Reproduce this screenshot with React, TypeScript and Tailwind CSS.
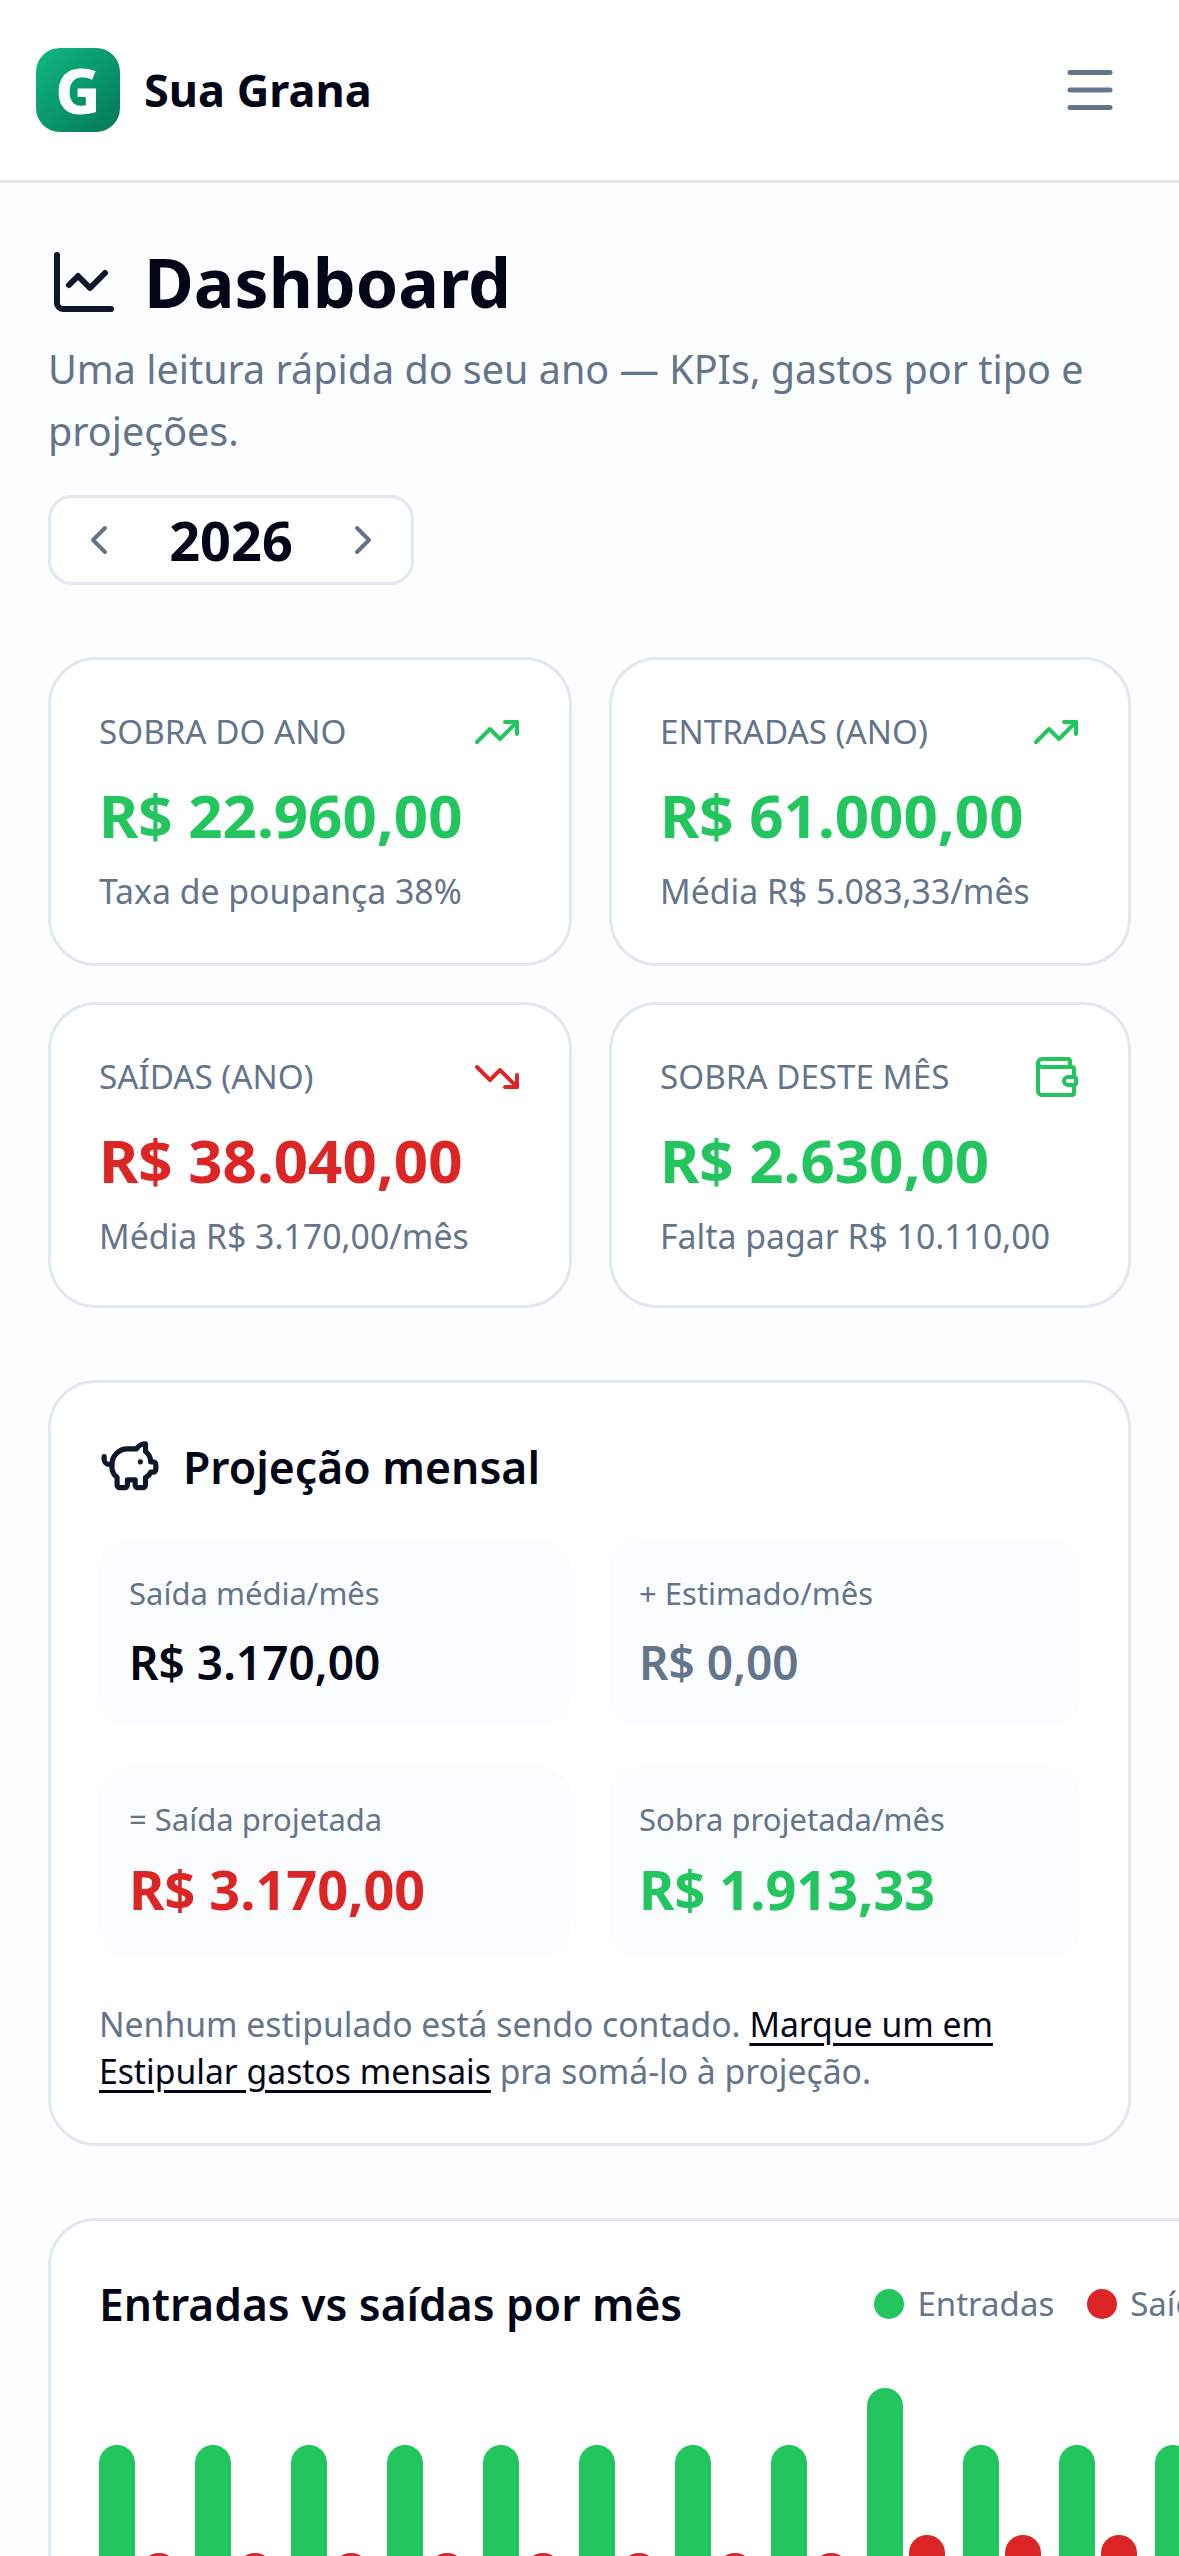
import { ChartLine, ChevronLeft, ChevronRight, Menu, PiggyBank, TrendingDown, TrendingUp, Wallet } from "lucide-react";

const kpis = [
  { label: "SOBRA DO ANO", value: "R$ 22.960,00", sub: "Taxa de poupança 38%", tone: "text-[#22c55e]", icon: "up", h: "h-[309px]" },
  { label: "ENTRADAS (ANO)", value: "R$ 61.000,00", sub: "Média R$ 5.083,33/mês", tone: "text-[#22c55e]", icon: "up", h: "h-[309px]" },
  { label: "SAÍDAS (ANO)", value: "R$ 38.040,00", sub: "Média R$ 3.170,00/mês", tone: "text-[#dc2626]", icon: "down", h: "h-[306px]" },
  { label: "SOBRA DESTE MÊS", value: "R$ 2.630,00", sub: "Falta pagar R$ 10.110,00", tone: "text-[#22c55e]", icon: "wallet", h: "h-[306px]" },
];

const months = [
  [285, 177], [285, 177], [285, 177], [285, 177], [285, 177], [285, 177],
  [285, 177], [285, 177], [342, 195], [285, 195], [285, 195], [285, 195],
];

function KpiIcon({ name, tone }: { name: string; tone: string }) {
  if (name === "up") return <TrendingUp size={48} strokeWidth={2} className={tone} />;
  if (name === "down") return <TrendingDown size={48} strokeWidth={2} className={tone} />;
  return <Wallet size={48} strokeWidth={2} className={tone} />;
}

function MiniStat({ label, value, big, tone }: { label: string; value: string; big?: boolean; tone: string }) {
  return (
    <div className={`rounded-[30px] bg-[#fafcfe] px-[30px] pt-[30px] ${big ? "h-[194px]" : "h-[188px]"}`}>
      <div className="text-[31px] leading-[48px] text-[#64748b]">{label}</div>
      <div
        className={
          big
            ? `mt-[10px] text-[54px] font-bold leading-[72px] ${tone}`
            : `mt-[12px] text-[46px] font-semibold leading-[66px] ${tone}`
        }
      >
        {value}
      </div>
    </div>
  );
}

export default function App() {
  return (
    <div className="h-[2556px] w-[1179px] overflow-hidden bg-[#fcfdfe] font-['Noto_Sans','Liberation_Sans',sans-serif] text-[#020617]">
      <header className="flex h-[183px] items-center justify-between border-b-[3px] border-[#e2e8f0] bg-white pl-[36px] pr-[59px]">
        <div className="flex items-center gap-[24px]">
          <div className="flex h-[84px] w-[84px] items-center justify-center rounded-[24px] bg-gradient-to-br from-[#10b981] to-[#047857] text-[62px] font-extrabold leading-none text-white">
            G
          </div>
          <span className="text-[45px] font-bold leading-[60px]">Sua Grana</span>
        </div>
        <Menu size={60} strokeWidth={2} className="text-[#64748b]" />
      </header>

      <main className="px-[48px] pt-[51px]">
        <div className="flex items-center gap-[24px]">
          <ChartLine size={72} strokeWidth={2} className="text-[#0f172a]" />
          <h1 className="text-[68px] font-bold leading-[96px]">Dashboard</h1>
        </div>
        <p className="mt-[8px] text-[39.5px] leading-[62px] text-[#64748b]">
          Uma leitura rápida do seu ano — KPIs, gastos por tipo e projeções.
        </p>

        <div className="mt-[33px] flex h-[90px] w-[366px] items-center justify-between rounded-[24px] border-[3px] border-[#e2e8f0] bg-white px-[24px]">
          <ChevronLeft size={48} strokeWidth={2} className="text-[#64748b]" />
          <span className="text-[54px] font-bold leading-[72px]">2026</span>
          <ChevronRight size={48} strokeWidth={2} className="text-[#64748b]" />
        </div>

        <div className="mt-[72px] grid grid-cols-[524px_522px] gap-x-[37px] gap-y-[36px]">
          {kpis.map((k) => (
            <div key={k.label} className={`rounded-[48px] border-[3px] border-[#e2e8f0] bg-white p-[48px] ${k.h}`}>
              <div className="flex items-center justify-between">
                <span className="text-[33.2px] leading-[48px] text-[#64748b]">{k.label}</span>
                <KpiIcon name={k.icon} tone={k.tone} />
              </div>
              <div className={`mt-[23px] text-[60px] font-bold leading-[72px] ${k.tone}`}>{k.value}</div>
              <div className="mt-[16px] text-[33.8px] leading-[48px] text-[#64748b]">{k.sub}</div>
            </div>
          ))}
        </div>

        <section className="mt-[72px] rounded-[48px] border-[3px] border-[#e2e8f0] bg-white p-[48px]">
          <div className="mt-[5px] flex items-center gap-[22px]">
            <PiggyBank size={62} strokeWidth={2} className="text-[#0f172a]" />
            <h2 className="text-[44.5px] font-semibold leading-[60px]">Projeção mensal</h2>
          </div>
          <div className="mt-[41px] grid grid-cols-[472px_471px] gap-x-[38px] gap-y-[38px]">
            <MiniStat label="Saída média/mês" value="R$ 3.170,00" tone="text-[#020617]" />
            <MiniStat label="+ Estimado/mês" value="R$ 0,00" tone="text-[#64748b]" />
            <MiniStat label="= Saída projetada" value="R$ 3.170,00" tone="text-[#dc2626]" big />
            <MiniStat label="Sobra projetada/mês" value="R$ 1.913,33" tone="text-[#22c55e]" big />
          </div>
          <p className="mt-[42px] text-[33.7px] leading-[47px] text-[#64748b]">
            Nenhum estipulado está sendo contado.{" "}
            <span className="text-[#020617] underline underline-offset-[6px]">Marque um em Estipular gastos mensais</span> pra somá-lo à projeção.
          </p>
        </section>

        <section className="mt-[72px] w-[1300px] rounded-[48px] border-[3px] border-[#e2e8f0] bg-white p-[48px]">
          <div className="mt-[5px] flex w-[1131px] items-center justify-between">
            <h2 className="text-[44.3px] font-semibold leading-[60px]">Entradas vs saídas por mês</h2>
            <div className="flex items-center gap-[33px] text-[33px] leading-[48px] text-[#64748b]">
              <div className="flex items-center gap-[13px]">
                <span className="h-[30px] w-[30px] rounded-full bg-[#22c55e]" />
                Entradas
              </div>
              <div className="flex items-center gap-[13px]">
                <span className="h-[30px] w-[30px] rounded-full bg-[#dc2626]" />
                Saídas
              </div>
            </div>
          </div>
          <div className="mt-[54px] flex h-[342px] items-end gap-[18px]">
            {months.map(([g, r], i) => (
              <div key={i} className="flex items-end gap-[6px]">
                <div className="w-[36px] rounded-t-[18px] bg-[#22c55e]" style={{ height: g }} />
                <div className="w-[36px] rounded-t-[18px] bg-[#dc2626]" style={{ height: r }} />
              </div>
            ))}
          </div>
        </section>
      </main>
    </div>
  );
}
